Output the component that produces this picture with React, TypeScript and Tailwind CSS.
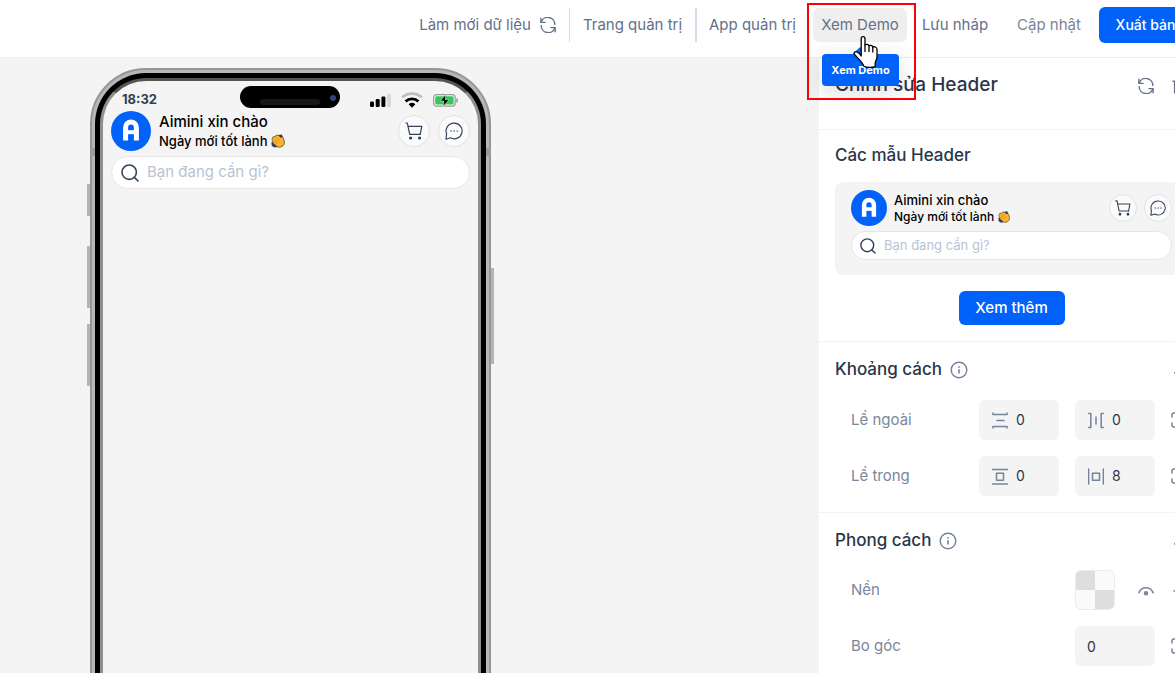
import type { ReactNode } from 'react';

function RefreshIcon({ className }: { className: string }) {
  return (
    <svg viewBox="0 0 16 16" className={className} fill="none" stroke="currentColor" strokeWidth="1.4" strokeLinecap="round" strokeLinejoin="round">
      <path d="M.9 1.2v4.2h4.2" />
      <path d="M1.2 5A7 7 0 0 1 14.8 7.4" />
      <path d="M15.1 14.8v-4.2h-4.2" />
      <path d="M14.8 11A7 7 0 0 1 1.2 8.6" />
    </svg>
  );
}

function InfoIcon() {
  return (
    <svg viewBox="0 0 18 18" className="w-[18px] h-[18px] text-[#74829a]" fill="none" stroke="currentColor" strokeWidth="1.4">
      <circle cx="9" cy="9" r="7.8" />
      <path d="M9 8.2v4.4" strokeWidth="1.6" />
      <path d="M9 5.2v1.6" strokeWidth="1.6" />
    </svg>
  );
}

function SearchIcon({ className }: { className: string }) {
  return (
    <svg viewBox="0 0 18 18" className={className} fill="none" stroke="currentColor" strokeWidth="1.6" strokeLinecap="round">
      <circle cx="8.2" cy="8.2" r="7.2" />
      <path d="m13.4 13.4 3.6 3.6" />
    </svg>
  );
}

function CartIcon({ className }: { className: string }) {
  return (
    <svg viewBox="0 0 18 18" className={className} fill="none" stroke="currentColor" strokeWidth="1.2" strokeLinecap="round" strokeLinejoin="round">
      <path d="M.8 1h1.5l2.4 11.4h10.6" />
      <path d="M3.4 4.4h13.4l-1.6 8" />
      <circle cx="5.6" cy="16" r="1" fill="currentColor" />
      <circle cx="14.6" cy="16" r="1" fill="currentColor" />
    </svg>
  );
}

function ChatIcon({ className }: { className: string }) {
  return (
    <svg viewBox="0 0 18 18" className={className} fill="none" stroke="currentColor" strokeWidth="1.2" strokeLinecap="round" strokeLinejoin="round">
      <path d="M9.2 1.2a7.8 7.8 0 1 1-3.7 14.6L1 17.2l.6-5.4A7.8 7.8 0 0 1 9.2 1.2Z" />
      <path d="M5.8 9h.6M8.9 9h.6M12 9h.6" />
    </svg>
  );
}

function ClapIcon({ className }: { className: string }) {
  return (
    <svg viewBox="0 0 14 14" className={className}>
      <path d="M7.4 1 10.800.4l1.400 3-2 1.400Z" fill="#27405f" />
      <path d="M.4 8.200 3 7.400l4 5.400-3.400.8L.8 12Z" fill="#27405f" />
      <path d="M1.400 4.200Q1.600 2.400 3.400 2.600L6 1.200q1.200-.4 2 .6l1.600 1.600 1-.4q1.400-.2 1.800 1.200l.9 3q.6 3.600-1.800 5-2.600 1.800-5.200.6L2.200 9.400Q1.400 8.600 2 7.600L1.200 6.200Q.8 5 1.400 4.200Z" fill="#fbb52f" stroke="#3f3020" strokeWidth=".7" />
      <path d="m3.400 4.800 4.200 4M5.400 3.400l4 4M3 7.400l2.800 2.600" stroke="#d97b16" strokeWidth=".8" fill="none" />
    </svg>
  );
}

function AiminiLogo({ className }: { className: string }) {
  return (
    <svg viewBox="0 0 40 40" className={className}>
      <circle cx="20" cy="20" r="20" fill="#0062f8" />
      <path d="M14.6 29.6V16.400a5.400 5.400 0 0 1 10.800 0v13.200" fill="none" stroke="#fff" strokeWidth="5" />
      <path d="M14 21.200h12" stroke="#fff" strokeWidth="4" />
    </svg>
  );
}

// Header exactly as it runs on the phone
function AppHeader() {
  return (
    <div className="px-2">
      <div className="flex items-center gap-2 h-10">
        <AiminiLogo className="w-10 h-10" />
        <div className="flex-1 text-black font-medium">
          <div className="text-[15px] leading-5">Aimini xin chào</div>
          <div className="flex items-center gap-1 text-[13px] leading-[18px]">
            Ngày mới tốt lành
            <ClapIcon className="w-3.5 h-3.5" />
          </div>
        </div>
        <button aria-label="Giỏ hàng" className="w-8 h-8 flex items-center justify-center rounded-full bg-[#fbfbfb] border border-[#e2e2e2] text-[#334258]">
          <CartIcon className="w-[18px] h-[18px]" />
        </button>
        <button aria-label="Tin nhắn" className="w-8 h-8 flex items-center justify-center rounded-full bg-[#fbfbfb] border border-[#e2e2e2] text-[#334258]">
          <ChatIcon className="w-[18px] h-[18px]" />
        </button>
      </div>
      <label className="mt-[5px] h-[33px] flex items-center gap-2 pl-[9px] pr-4 rounded-full bg-white border border-[#e6e6e6] text-[#334258]">
        <SearchIcon className="w-[18px] h-[18px] shrink-0" />
        <input aria-label="Tìm kiếm" placeholder="Bạn đang cần gì?" className="w-full min-w-0 text-[15px] outline-none placeholder:text-[#b8c3d4]" />
      </label>
    </div>
  );
}

function HeaderTemplate() {
  return (
    <div className="rounded-lg bg-[#f4f4f4] px-4 pt-2 pb-[15px]">
      <div className="flex items-center gap-[7px] h-9">
        <AiminiLogo className="w-9 h-9" />
        <div className="flex-1 text-black font-medium">
          <div className="text-[13px] leading-[18px]">Aimini xin chào</div>
          <div className="flex items-center gap-1 text-xs leading-4">
            Ngày mới tốt lành
            <ClapIcon className="w-3 h-3" />
          </div>
        </div>
        <button aria-label="Giỏ hàng" className="w-7 h-7 flex items-center justify-center rounded-full bg-[#fbfbfb] border border-[#e2e2e2] text-[#334258]">
          <CartIcon className="w-4 h-4" />
        </button>
        <button aria-label="Tin nhắn" className="w-7 h-7 flex items-center justify-center rounded-full bg-[#fbfbfb] border border-[#e2e2e2] text-[#334258]">
          <ChatIcon className="w-4 h-4" />
        </button>
      </div>
      <label className="mt-[5px] h-[29px] flex items-center gap-2 px-2 rounded-full bg-white border border-[#e6e6e6] text-[#334258]">
        <SearchIcon className="w-4 h-4 shrink-0" />
        <input aria-label="Tìm kiếm mẫu" placeholder="Bạn đang cần gì?" className="w-full min-w-0 text-[13px] outline-none placeholder:text-[#b8c3d4]" />
      </label>
    </div>
  );
}

function StatusBar() {
  return (
    <div className="relative flex items-center justify-between h-[30px] pl-[19px] pr-[20px] pt-2">
      <span className="text-[13px] font-bold text-[#333f50]">18:32</span>
      <div className="absolute left-[137px] top-[5px] w-[100px] h-[22px] rounded-full bg-black">
        <div className="absolute left-5 top-[13px] w-[60px] h-[6px] rounded-full bg-[#181818]"></div>
        <div className="absolute right-1 top-[9px] w-[6px] h-[6px] rounded-full bg-[#30477c]"></div>
      </div>
      <div className="flex items-center gap-[10px]">
        <svg viewBox="0 0 21 13" className="w-[21px] h-[13px]">
          <rect x="0" y="7.5" width="4" height="5.5" rx="1.2" />
          <rect x="5.7" y="5" width="4" height="8" rx="1.2" />
          <rect x="11.4" y="2.5" width="4" height="10.5" rx="1.2" />
          <rect x="17" y="0" width="4" height="13" rx="1.2" fill="#d5d9df" />
        </svg>
        <svg viewBox="0 0 22 16" className="w-[22px] h-4" fill="none" strokeWidth="2.8">
          <path d="M1 5.6a14.6 14.6 0 0 1 20 0" stroke="#bfc0c2" />
          <path d="M4.6 9.4a9.4 9.4 0 0 1 12.8 0" stroke="#000" />
          <path d="M7.6 12.2a5.2 5.2 0 0 1 6.8 0L11 15.8Z" fill="#000" />
        </svg>
        <svg viewBox="0 0 25 13" className="w-[25px] h-[13px]">
          <rect x=".6" y=".6" width="21.6" height="11.6" rx="3" fill="none" stroke="#9b9b9b" strokeWidth="1.2" />
          <rect x="2.2" y="2.2" width="18.4" height="8.4" rx="1.6" fill="#34c759" />
          <path d="M24 4.6v4" stroke="#8e8e8e" strokeWidth="1.4" />
          <path d="M12.8.4 7.4 7h3.6l-.8 5.6L16 5.8h-3.8Z" fill="#000" stroke="#f4f4f4" strokeWidth=".5" />
        </svg>
      </div>
    </div>
  );
}

function PhonePreview() {
  return (
    <div className="relative w-[401px] h-[820px]">
      <div className="absolute -left-[3px] top-[116px] w-[3px] h-8 bg-[#b4b4b4]"></div>
      <div className="absolute -left-[3px] top-[178px] w-[3px] h-[62px] bg-[#b4b4b4]"></div>
      <div className="absolute -left-[3px] top-[256px] w-[3px] h-[62px] bg-[#b4b4b4]"></div>
      <div className="absolute -right-[3px] top-[200px] w-[3px] h-24 bg-[#b4b4b4]"></div>
      <div className="h-full rounded-[56px] bg-[#b7b7b7] border-2 border-[#969696] p-[3px]">
        <div className="h-full rounded-[51px] bg-black p-[5px]">
          <div className="h-full rounded-[46px] bg-[#f4f4f4] border-3 border-[#8f8f8f] border-t-[#555555]">
            <StatusBar />
            <AppHeader />
          </div>
        </div>
      </div>
      <div className="absolute left-0 top-20 w-[5px] h-2 bg-[#9a9aa0]"></div>
      <div className="absolute right-0 top-20 w-[5px] h-2 bg-[#9a9aa0]"></div>
    </div>
  );
}

function DemoButton() {
  return (
    <div className="relative">
      <button className="w-[94px] h-[34px] rounded-md bg-[#efefef]">Xem Demo</button>
      <div className="absolute z-20 left-[9px] top-[46px] w-[77px] h-8 flex items-center justify-center rounded bg-[#0062f8] text-[11px] font-bold text-white shadow-[0_6px_24px_rgba(0,0,0,0.15)]" role="tooltip">
        <div className="absolute left-[33px] -top-[5px] w-[10px] h-[10px] rotate-45 bg-[#0062f8]"></div>
        <span className="relative whitespace-nowrap">Xem Demo</span>
      </div>
      <div className="absolute z-30 -left-[6px] -top-[5px] w-[109px] h-[97px] border-2 border-[#fb0007] pointer-events-none"></div>
      <svg viewBox="0 0 26 32" className="absolute z-40 left-10 top-7 w-[26px] h-8 pointer-events-none" fill="#fff" stroke="#000" strokeWidth="1.3" strokeLinejoin="round" strokeLinecap="round">
        <path d="M8.2 20V2.8C8.2.9 9 .7 10 .7s2 .4 2 2.1V9c.6-1 3.4-1 4 .8 1-.8 3.4-.6 3.8 1.2 1.4-.6 4.2-.2 4.2 2.4v7.2c0 3-1.4 4.2-1.8 6.2v3.8c-3 1.2-8.4 1.2-11.400-.4C10.200 27 5 22.600 1.600 18.400.4 16.600 2 15.400 3.800 15.800c1.800.4 3.200 2 4.400 4.200Z" />
        <path d="M12 9v6.500M16 10v5.500M19.800 11.200v4.800" />
      </svg>
    </div>
  );
}

function TopBar() {
  return (
    <header className="flex items-center justify-end h-[58px] pr-3 pb-[7px] bg-white border-b border-[#ebedf5] text-[15px] text-[#64708a] whitespace-nowrap">
      <button className="flex items-center gap-[9px] pr-[13px]">
        Làm mới dữ liệu
        <RefreshIcon className="w-4 h-4" />
      </button>
      <a href="#trang-quan-tri" className="w-[126px] h-[34px] flex items-center justify-center border-l border-[#d7dde8]">Trang quản trị</a>
      <a href="#app-quan-tri" className="w-[118px] h-[34px] flex items-center pl-3 border-l-2 border-[#d7dde8]">App quản trị</a>
      <DemoButton />
      <button className="w-24 h-[34px]">Lưu nháp</button>
      <button className="w-24 h-[34px] pr-1 text-[#7b8496]">Cập nhật</button>
      <button className="w-[93px] h-9 rounded-md bg-[#0062f8] text-sm font-medium text-white">Xuất bản</button>
    </header>
  );
}

function MarginVertical() {
  return <path d="M1 1v1.500h14V1M5 8.500h7M1 16v-1.500h14V16" />;
}

function MarginHorizontal() {
  return <path d="M.8 1.500h2v14h-2M8 5v7M15.200 1.500h-2v14h2" />;
}

function PaddingVertical() {
  return <path d="M.5 1.500h15M.5 16h15M4.500 5.200h7v7h-7z" />;
}

function PaddingHorizontal() {
  return <path d="M.6 1v15M15.400 1v15M4.500 5.200h7v7h-7z" />;
}

function SpacingField({ label, value, children }: { label: string; value: number; children: ReactNode }) {
  return (
    <label className="w-20 h-10 flex items-center gap-2 px-[13px] rounded-md bg-[#f4f4f4]">
      <svg viewBox="0 0 16 17" className="w-4 h-[17px] shrink-0 text-[#74829a]" fill="none" stroke="currentColor" strokeWidth="1.5" strokeLinejoin="round" strokeLinecap="round">
        {children}
      </svg>
      <input aria-label={label} defaultValue={value} className="w-full min-w-0 text-sm text-[#29364a] outline-none" />
    </label>
  );
}

function ExpandButton() {
  return (
    <button aria-label="Mở rộng" className="w-[17px] h-4 text-[#74829a]">
      <svg viewBox="0 0 16 16" className="w-4 h-4" fill="none" stroke="currentColor" strokeWidth="1.5" strokeLinecap="round">
        <path d="M1 5V3a2 2 0 0 1 2-2h2M11 1h2a2 2 0 0 1 2 2v2M15 11v2a2 2 0 0 1-2 2h-2M5 15H3a2 2 0 0 1-2-2v-2" />
      </svg>
    </button>
  );
}

function SectionTitle({ children }: { children: ReactNode }) {
  return (
    <div className="flex items-center gap-2 h-6">
      <h3 className="text-[17px] font-medium text-[#29364a]">{children}</h3>
      <InfoIcon />
      <button aria-label="Thu gọn" className="ml-auto text-[#3b475b]">
        <svg viewBox="0 0 16 16" className="w-4 h-4" fill="none" stroke="currentColor" strokeWidth="1.6" strokeLinecap="round" strokeLinejoin="round">
          <path d="m3 11 5-5 5 5" />
        </svg>
      </button>
    </div>
  );
}

function EditPanel() {
  return (
    <aside className="w-[385px] shrink-0 bg-white">
      <div className="flex items-center h-[72px] px-4 pb-4 border-b border-[#f3f3f5]">
        <h2 className="flex-1 text-[19px] font-medium text-[#29364a]">Chỉnh sửa Header</h2>
        <button aria-label="Làm mới" className="mr-[18px] text-[#64708a]">
          <RefreshIcon className="w-4 h-4" />
        </button>
        <button aria-label="Xóa" className="text-[#64708a]">
          <svg viewBox="0 0 16 16" className="w-4 h-4" fill="none" stroke="currentColor" strokeWidth="1.4" strokeLinecap="round">
            <path d="M1 3.200h14M5.500 3V1h5v2M2.600 3.500v11.300h10.800V3.500" />
          </svg>
        </button>
      </div>

      <div className="px-4 pt-[13px] pb-4 border-b border-[#f3f3f5]">
        <h3 className="mb-[15px] text-[17px] leading-6 font-medium text-[#29364a]">Các mẫu Header</h3>
        <HeaderTemplate />
        <div className="flex justify-center mt-4">
          <button className="w-[106px] h-[34px] rounded-md bg-[#0062f8] text-[15px] font-medium text-white">Xem thêm</button>
        </div>
      </div>

      <div className="px-4 py-4 border-b border-[#f3f3f5]">
        <SectionTitle>Khoảng cách</SectionTitle>
        <div className="mt-[18px] space-y-4 pl-4 text-[15px] text-[#7a879b]">
          <div className="flex items-center gap-4">
            <span className="flex-1">Lề ngoài</span>
            <SpacingField label="Lề ngoài dọc" value={0}>
              <MarginVertical />
            </SpacingField>
            <SpacingField label="Lề ngoài ngang" value={0}>
              <MarginHorizontal />
            </SpacingField>
            <ExpandButton />
          </div>
          <div className="flex items-center gap-4">
            <span className="flex-1">Lề trong</span>
            <SpacingField label="Lề trong dọc" value={0}>
              <PaddingVertical />
            </SpacingField>
            <SpacingField label="Lề trong ngang" value={8}>
              <PaddingHorizontal />
            </SpacingField>
            <ExpandButton />
          </div>
        </div>
      </div>

      <div className="px-4 py-4">
        <SectionTitle>Phong cách</SectionTitle>
        <div className="mt-[17px] space-y-4 pl-4 text-[15px] text-[#7a879b]">
          <div className="flex items-center">
            <span className="flex-1">Nền</span>
            <button aria-label="Chọn màu nền" className="grid grid-cols-2 w-10 h-10 mr-[23px] overflow-hidden rounded-md border border-[#ececec] bg-[#fafafa]">
              <span className="bg-[#dedede]"></span>
              <span></span>
              <span></span>
              <span className="bg-[#dedede]"></span>
            </button>
            <button aria-label="Ẩn hiện nền" className="mr-[17px]">
              <svg viewBox="0 0 16 16" className="w-4 h-4" fill="none" stroke="currentColor" strokeWidth="1.6" strokeLinecap="round">
                <path d="M.9 10.600Q3 5.800 8 5.800t7.100 4.800" />
                <circle cx="8" cy="11.200" r="1.500" fill="currentColor" />
              </svg>
            </button>
            <button aria-label="Thêm màu nền" className="w-[17px]">
              <svg viewBox="0 0 16 16" className="w-4 h-4" stroke="currentColor" strokeWidth="1.500" strokeLinecap="round">
                <path d="M3 9h11M8.500 3.500v11" />
              </svg>
            </button>
          </div>
          <div className="flex items-center gap-4">
            <label htmlFor="radius" className="flex-1">Bo góc</label>
            <input id="radius" defaultValue="0" className="w-20 h-10 px-3 rounded-md bg-[#f4f4f4] text-sm text-[#29364a] outline-none" />
            <ExpandButton />
          </div>
        </div>
      </div>
    </aside>
  );
}

export default function App() {
  return (
    <div className="h-screen overflow-hidden bg-[#f4f4f4] font-['Inter',sans-serif]">
      {/* the editor runs past the right edge of the window */}
      <div className="flex flex-col h-full w-[calc(100%+29px)]">
        <TopBar />
        <div className="flex flex-1 min-h-0">
          <main className="flex-1 min-w-0 overflow-hidden pt-[10px] pl-[90px]">
            <PhonePreview />
          </main>
          <EditPanel />
        </div>
      </div>
    </div>
  );
}
